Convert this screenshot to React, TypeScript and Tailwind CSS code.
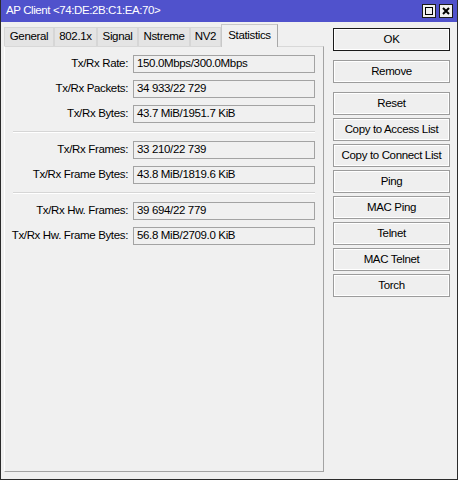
import React from 'react';

const tabs = [
  { name: 'General', w: 'w-[50px]' },
  { name: '802.1x', w: 'w-[43px]' },
  { name: 'Signal', w: 'w-[41px]' },
  { name: 'Nstreme', w: 'w-[52px]' },
  { name: 'NV2', w: 'w-[31px]' },
];

const groups = [
  [
    ['Tx/Rx Rate:', '150.0Mbps/300.0Mbps'],
    ['Tx/Rx Packets:', '34 933/22 729'],
    ['Tx/Rx Bytes:', '43.7 MiB/1951.7 KiB'],
  ],
  [
    ['Tx/Rx Frames:', '33 210/22 739'],
    ['Tx/Rx Frame Bytes:', '43.8 MiB/1819.6 KiB'],
  ],
  [
    ['Tx/Rx Hw. Frames:', '39 694/22 779'],
    ['Tx/Rx Hw. Frame Bytes:', '56.8 MiB/2709.0 KiB'],
  ],
];

const actions = ['Copy to Access List', 'Copy to Connect List', 'Ping', 'MAC Ping', 'Telnet', 'MAC Telnet', 'Torch'];

function Button({ label, primary }: { label: string; primary?: boolean }) {
  return (
    <button
      className={`h-[23px] w-[117px] whitespace-nowrap border bg-[#efefef] text-[11.5px] tracking-[-0.35px] text-black shadow-[inset_0_0_0_1px_#ffffff] ${
        primary ? 'border-[#1a1a1a]' : 'border-[#9c9c9c]'
      }`}
    >
      {label}
    </button>
  );
}

function Row({ label, value }: { label: string; value: string }) {
  return (
    <div className="flex h-[18px] items-center">
      <span className="w-[123px] whitespace-nowrap text-right">{label}</span>
      <div className="ml-[5px] flex h-[18px] w-[182px] items-center whitespace-nowrap border border-[#a3a3a3] pl-[3px]">
        {value}
      </div>
    </div>
  );
}

export default function App() {
  return (
    <div
      className="flex h-[480px] w-[458px] flex-col border-x border-b border-[#2b2b2b] bg-[#f0f0f0] text-[11.5px] tracking-[-0.35px] text-black"
      style={{ fontFamily: '"Liberation Sans", Arial, sans-serif' }}
    >
      <div className="flex h-[22px] shrink-0 items-center justify-between bg-[#5052cc] pl-[5px] pr-[4px] text-[11.5px] tracking-[-0.4px] text-white">
        <span>AP Client &lt;74:DE:2B:C1:EA:70&gt;</span>
        <div className="flex gap-[3px]">
          <div className="flex h-[14px] w-[14px] items-center justify-center border border-[#1a1a1a] bg-[#f0f0f0]">
            <div className="h-[8px] w-[8px] border border-black" />
          </div>
          <div className="flex h-[14px] w-[14px] items-center justify-center border border-[#1a1a1a] bg-[#f0f0f0]">
            <svg width="8" height="8" viewBox="0 0 8 8">
              <path d="M1 1L7 7M7 1L1 7" stroke="black" strokeWidth="2" />
            </svg>
          </div>
        </div>
      </div>

      <div className="flex flex-1 pl-[3px] pt-[2px]">
        <div className="flex w-[320px] flex-col">
          <div className="flex h-[22px] items-end">
            {tabs.map((t) => (
              <div
                key={t.name}
                className={`${t.w} flex h-[19px] items-center justify-center whitespace-nowrap border border-b-0 border-[#d6d6d6] bg-[#e4e4e4]`}
              >
                {t.name}
              </div>
            ))}
            <div className="relative top-[1px] z-10 flex h-[23px] w-[57px] items-center justify-center border border-b-0 border-[#c8c8c8] border-r-[#a8a8a8] bg-[#f0f0f0]">
              Statistics
            </div>
          </div>
          <div className="flex h-[426px] flex-col border border-[#d8d8d8] border-l-white border-r-[#a3a3a3] border-b-[#a3a3a3] pt-[8px]">
            {groups.map((g, i) => (
              <div key={i} className="flex flex-col">
                {i > 0 && (
                  <div className="my-[8px] ml-[8px] w-[302px] border-t border-b border-t-[#d6d6d6] border-b-white" />
                )}
                <div className="flex flex-col gap-[7px]">
                  {g.map(([l, v]) => (
                    <Row key={l} label={l} value={v} />
                  ))}
                </div>
              </div>
            ))}
          </div>
        </div>

        <div className="ml-[9px] flex flex-col pt-[4px]">
          <Button label="OK" primary />
          <div className="mt-[9px]">
            <Button label="Remove" />
          </div>
          <div className="mt-[9px] flex flex-col gap-[3px]">
            <Button label="Reset" />
            {actions.map((a) => (
              <Button key={a} label={a} />
            ))}
          </div>
        </div>
      </div>
    </div>
  );
}
